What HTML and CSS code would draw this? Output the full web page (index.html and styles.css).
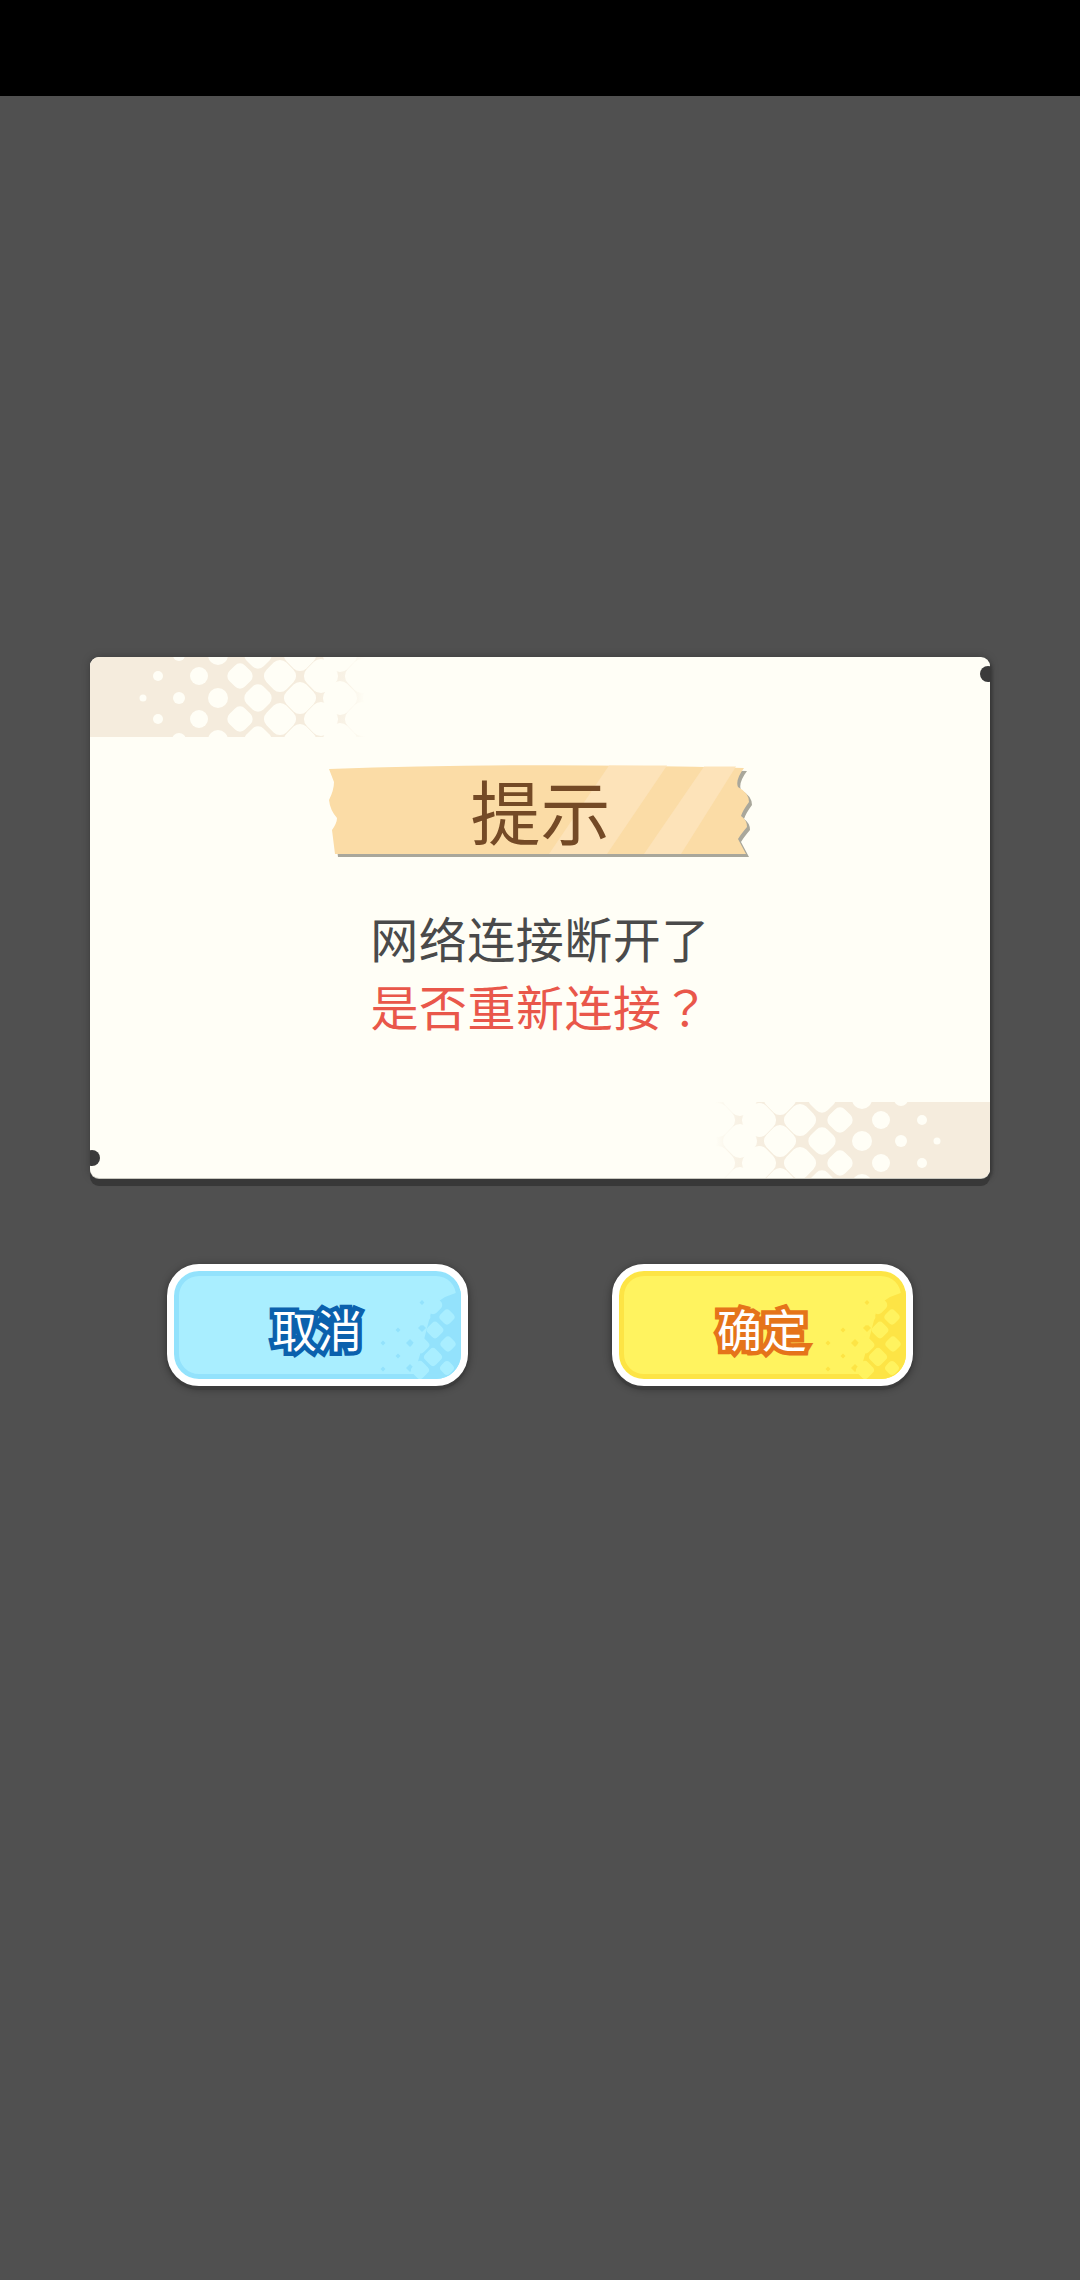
FILE: index.html
```html
<!DOCTYPE html>
<html lang="zh-CN">
<head>
<meta charset="utf-8">
<title>提示</title>
<link rel="stylesheet" href="styles.css">
</head>
<body>
<svg class="defs" width="0" height="0" aria-hidden="true">
  <defs>
    <linearGradient id="bandFade" x1="0" y1="0" x2="1" y2="0">
      <stop offset="0" stop-color="#f5ecdd"/>
      <stop offset="0.8" stop-color="#f5ecdd"/>
      <stop offset="0.94" stop-color="#f5ecdd" stop-opacity="0.6"/>
      <stop offset="1" stop-color="#f5ecdd" stop-opacity="0"/>
    </linearGradient>
    <symbol id="halftone" viewBox="0 0 290 80">
      <rect width="275" height="80" fill="url(#bandFade)"/>
      <g class="hf-card">
        <circle cx="68" cy="19" r="5"/><circle cx="109" cy="19" r="9"/>
        <circle cx="53" cy="41" r="3.5"/><circle cx="89" cy="41" r="6"/><circle cx="128" cy="41" r="10"/>
        <circle cx="68" cy="62" r="5"/><circle cx="109" cy="62" r="9"/>
        <circle cx="89" cy="-2" r="6"/><circle cx="128" cy="-2" r="10"/>
        <circle cx="89" cy="83" r="7"/><circle cx="128" cy="83" r="10"/>

        <rect x="139" y="8" width="22" height="22" rx="7" transform="rotate(45 150 19)"/>
        <rect x="176" y="5" width="28" height="28" rx="9" transform="rotate(45 190 19)"/>
        <rect x="216" y="4" width="30" height="30" rx="10" transform="rotate(45 231 19)"/>
        <rect x="257" y="4" width="30" height="30" rx="10" transform="rotate(45 272 19)"/>

        <rect x="156" y="29" width="24" height="24" rx="8" transform="rotate(45 168 41)"/>
        <rect x="196" y="27" width="28" height="28" rx="9" transform="rotate(45 210 41)"/>
        <rect x="235" y="26" width="30" height="30" rx="10" transform="rotate(45 250 41)"/>
        <rect x="275" y="26" width="30" height="30" rx="10" transform="rotate(45 290 41)"/>

        <rect x="139" y="51" width="22" height="22" rx="7" transform="rotate(45 150 62)"/>
        <rect x="176" y="48" width="28" height="28" rx="9" transform="rotate(45 190 62)"/>
        <rect x="216" y="47" width="30" height="30" rx="10" transform="rotate(45 231 62)"/>
        <rect x="257" y="47" width="30" height="30" rx="10" transform="rotate(45 272 62)"/>

        <rect x="156" y="-14" width="24" height="24" rx="8" transform="rotate(45 168 -2)"/>
        <rect x="196" y="-16" width="28" height="28" rx="9" transform="rotate(45 210 -2)"/>
        <rect x="235" y="-17" width="30" height="30" rx="10" transform="rotate(45 250 -2)"/>

        <rect x="156" y="71" width="24" height="24" rx="8" transform="rotate(45 168 83)"/>
        <rect x="196" y="69" width="28" height="28" rx="9" transform="rotate(45 210 83)"/>
        <rect x="235" y="68" width="30" height="30" rx="10" transform="rotate(45 250 83)"/>
      </g>
    </symbol>
    <symbol id="btn-dots" viewBox="0 0 100 90">
      <g class="hf-rim">
        <path d="M72 16 84 8 100 2V90H52L60 62Z"/>
        <path d="M61 11l2.500 2.500-2.500 2.500-2.500-2.500zM37 38.500l2.500 2.500-2.500 2.500-2.500-2.500zM22 51.500l2.500 2.500-2.500 2.500-2.500-2.500zM37 64.500l2.500 2.500-2.500 2.500-2.500-2.500zM22 77.500l2.500 2.500-2.500 2.500-2.500-2.500zM49 50l4 4-4 4-4-4zM49 75l4 4-4 4-4-4zM61 35l4 4-4 4-4-4z"/>
      </g>
      <g class="hf-fill">
        <rect x="79.500" y="21.500" width="13" height="13" rx="4" transform="rotate(45 86 28)"/>
        <rect x="67" y="34" width="14" height="14" rx="4" transform="rotate(45 74 41)"/>
        <rect x="80.500" y="48.500" width="13" height="13" rx="4" transform="rotate(45 87 55)"/>
        <rect x="64.500" y="60.500" width="15" height="15" rx="4" transform="rotate(45 72 68)"/>
        <rect x="80" y="73" width="12" height="12" rx="4" transform="rotate(45 86 79)"/>
        <rect x="53" y="49" width="14" height="14" rx="4" transform="rotate(45 60 56)"/>
        <rect x="51.500" y="73.500" width="15" height="15" rx="4" transform="rotate(45 59 81)"/>
        <rect x="64" y="8" width="16" height="16" rx="5" transform="rotate(45 72 16)"/>
        <rect x="54" y="21" width="14" height="14" rx="4" transform="rotate(45 61 28)"/>
      </g>
    </symbol>
  </defs>
</svg>

<div class="status-bar"></div>

<main class="screen">
  <section class="card">
    <svg class="band band-tl"><use href="#halftone"/></svg>
    <svg class="band band-br"><use href="#halftone"/></svg>
    <span class="notch notch-tr"></span>
    <span class="notch notch-bl"></span>

    <div class="ribbon">
      <svg class="ribbon-art" viewBox="0 0 424 102">
        <path class="ribbon-shadow" d="M3 12Q200 5 418 11Q409 23 412 30Q423 36 423 45Q417 53 415 59Q421 63 421 70Q415 77 412 82L420 97H9L6 72Q11 65 11 60Q4 52 3 42Q8 32 8 24Z"/>
        <path class="ribbon-base" d="M0 9Q200 2 415 8Q406 20 409 27Q420 33 420 42Q414 50 412 56Q418 60 418 67Q412 74 409 79L417 94H6L3 70Q8 63 8 58Q1 50 0 40Q5 30 5 22Z"/>
        <path class="ribbon-stripe" d="M280 5.500H338L278 94H220Z"/>
        <path class="ribbon-stripe" d="M375 6.500H407L352 94H315Z"/>
      </svg>
      <h1 class="ribbon-title">提示</h1>
    </div>

    <div class="message">
      <p class="message-line">网络连接断开了</p>
      <p class="message-line message-alert">是否重新连接<span class="fw-mark">？</span></p>
    </div>
  </section>

  <div class="actions">
    <button class="btn btn-cancel" type="button">
      <svg class="btn-pattern"><use href="#btn-dots"/></svg>
      <span class="btn-label">取消</span>
    </button>
    <button class="btn btn-confirm" type="button">
      <svg class="btn-pattern"><use href="#btn-dots"/></svg>
      <span class="btn-label">确定</span>
    </button>
  </div>
</main>
</body>
</html>
```
FILE: styles.css
```css
* { box-sizing: border-box; }

html, body {
  margin: 0;
  width: 1080px;
  height: 2280px;
  overflow: hidden;
  background: #505050;
  font-family: "Noto Sans CJK SC", "Noto Sans", sans-serif;
}

.defs { position: absolute; }

.status-bar { height: 96px; background: #000; }

.screen {
  display: flex;
  flex-direction: column;
  align-items: center;
  padding-top: 561px;
}

.card {
  position: relative;
  width: 900px;
  height: 521px;
  padding-top: 103px;
  display: flex;
  flex-direction: column;
  align-items: center;
  overflow: hidden;
  border-radius: 9px;
  background: #fffef6;
  box-shadow: 0 1px 0 #c9c8bf, 0 8px 0 #383838, 2px 3px 3px #383838, 0 0 8px rgba(0, 0, 0, .25);
}

.hf-card { fill: #fffef6; }

.band {
  position: absolute;
  width: 290px;
  height: 80px;
}
.band-tl { top: 0; left: 0; }
.band-br { right: 0; bottom: -4px; transform: rotate(180deg); }

.notch {
  position: absolute;
  width: 16px;
  height: 16px;
  border-radius: 50%;
  background: #3b3b3b;
}
.notch-tr { top: 9px; right: -6px; }
.notch-bl { bottom: 12px; left: -6px; }

.ribbon {
  position: relative;
  width: 424px;
  height: 102px;
  margin-left: 1px;
  padding-bottom: 2px;
  display: flex;
  align-items: center;
  justify-content: center;
}
.ribbon-art {
  position: absolute;
  top: 0;
  left: 0;
  width: 424px;
  height: 102px;
}
.ribbon-shadow { fill: #a9a79b; }
.ribbon-base { fill: #fbdca6; }
.ribbon-stripe { fill: #fde3b9; }

.ribbon-title {
  position: relative;
  margin: 0;
  font-size: 70px;
  font-weight: 400;
  line-height: 1;
  color: #744a26;
}

.message {
  margin-top: 41px;
  text-align: center;
  font-size: 48px;
  letter-spacing: .5px;
  line-height: 68px;
  color: #4a4a4a;
}
.message-line { margin: 0; }
.message-alert { color: #e9574a; }
.fw-mark {
  display: inline-block;
  width: 1em;
  text-align: center;
  text-spacing-trim: space-all;
  font-family: "Noto Sans CJK JP", sans-serif;
}

.actions {
  display: flex;
  gap: 144px;
  margin-top: 86px;
  padding-right: 1px;
}

.btn {
  position: relative;
  width: 301px;
  height: 122px;
  padding: 0;
  display: flex;
  align-items: center;
  justify-content: center;
  border: 7px solid #fff;
  border-radius: 32px;
  overflow: hidden;
  font-family: inherit;
  background: var(--fill);
  box-shadow: inset 0 0 0 5px var(--rim), 0 4px 0 #3d3d3d, 0 2px 8px rgba(0, 0, 0, .45);
}
.btn-cancel { --fill: #a9eeff; --rim: #93e2fc; --ink: #0b61ad; }
.btn-confirm { --fill: #fff35f; --rim: #fde445; --ink: #e5741a; }

.hf-rim { fill: var(--rim); }
.hf-fill { fill: var(--fill); }

.btn-pattern {
  position: absolute;
  right: 0;
  bottom: 0;
  width: 100px;
  height: 90px;
}

.btn-label {
  position: relative;
  top: 3px;
  font-size: 45px;
  font-weight: 400;
  line-height: 1;
  color: #fff;
  -webkit-text-stroke: 9px var(--ink);
  paint-order: stroke fill;
}
```
